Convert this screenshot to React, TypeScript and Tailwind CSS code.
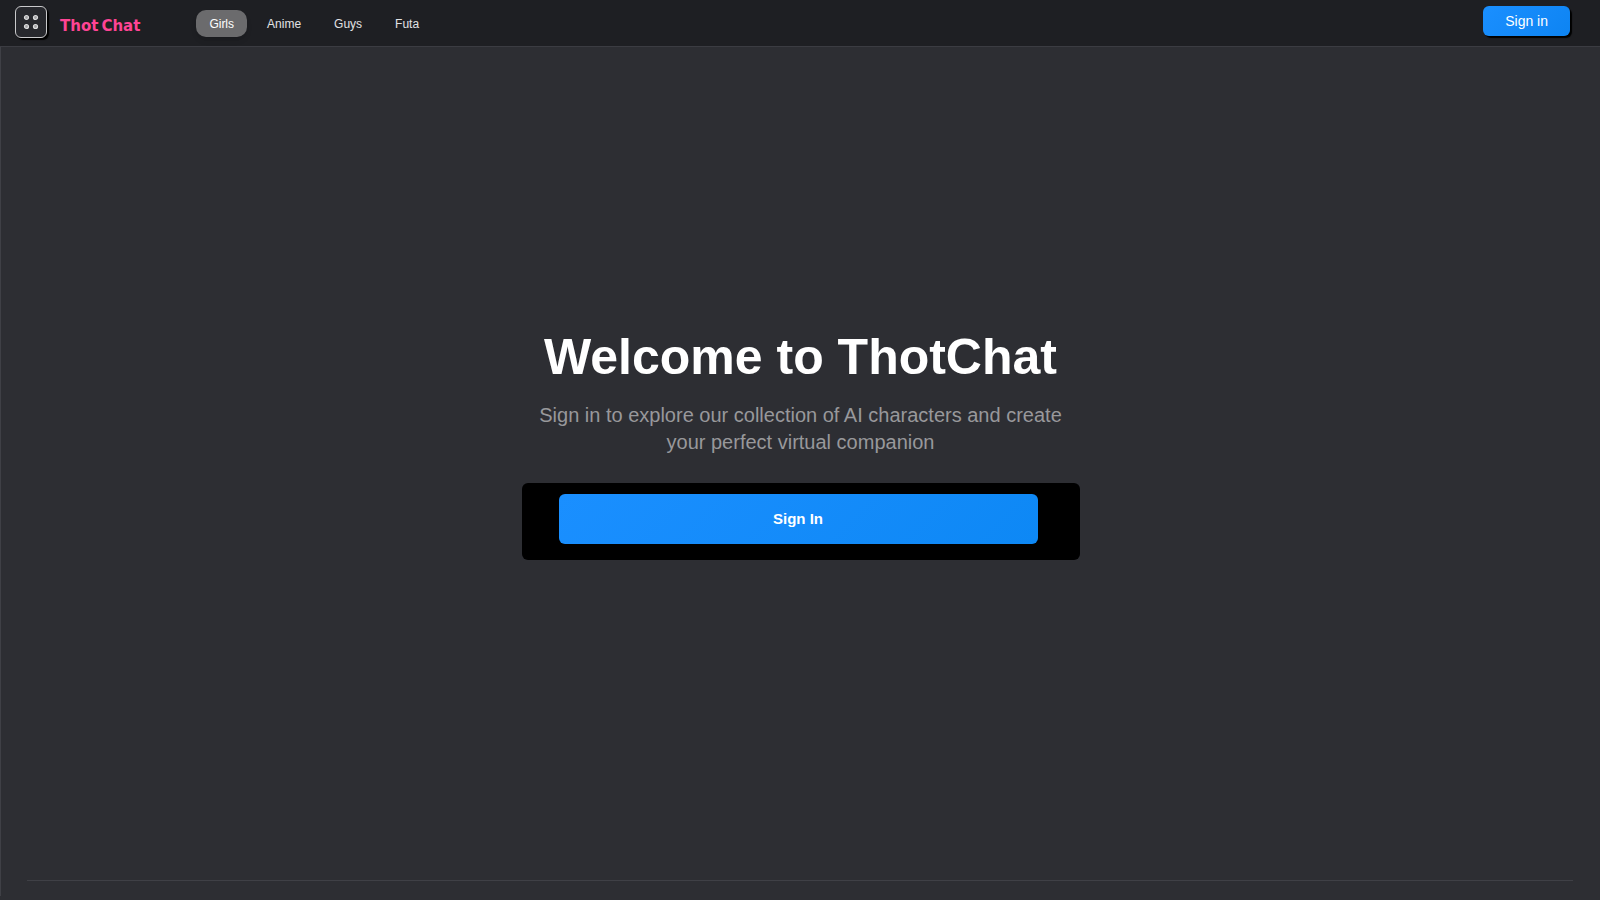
import React, { useState } from 'react';

const categories = ['Girls', 'Anime', 'Guys', 'Futa'];

const GridIcon = () => (
  <svg className="w-4 h-4" viewBox="0 0 16 16" fill="#a3a3a5" stroke="#dededf" strokeWidth="1.2" aria-hidden="true">
    <circle cx="3.5" cy="3.5" r="2" />
    <circle cx="12.5" cy="3.5" r="2" />
    <circle cx="3.5" cy="12.5" r="2" />
    <circle cx="12.5" cy="12.5" r="2" />
  </svg>
);

interface HeaderProps {
  active: string;
  onSelect: (category: string) => void;
}

const Header = ({ active, onSelect }: HeaderProps) => (
  <header className="flex items-start h-[47px] pt-1.5 pl-[15px] pr-[30px] bg-[#1e1f23] border-b border-[#3b3c42]">
    <button
      type="button"
      aria-label="Open menu"
      className="flex items-center justify-center w-8 h-8 rounded-md border border-[#c9c9cb] bg-[#27282d] shadow-[2px_2px_1px_#000]"
    >
      <GridIcon />
    </button>

    <a
      href="#"
      className="flex gap-[3px] ml-[13px] mt-2 text-[15px] leading-6 font-bold text-[#ff4494] font-['DejaVu_Sans',sans-serif]"
    >
      <span>Thot</span>
      <span>Chat</span>
    </a>

    <nav className="flex gap-[7px] ml-14 mt-1">
      {categories.map((category) => (
        <button
          key={category}
          type="button"
          onClick={() => onSelect(category)}
          className={`h-[27px] px-[13px] rounded-[10px] text-xs ${
            active === category ? 'bg-[#6b6b6d] text-white shadow-md' : 'text-[#e2e2e3]'
          }`}
        >
          {category}
        </button>
      ))}
    </nav>

    <button
      type="button"
      className="ml-auto h-[30px] px-[22px] rounded-md bg-linear-135 from-[#1a8fff] to-[#0d84f2] text-sm text-white shadow-[2px_2px_1px_#000]"
    >
      Sign in
    </button>
  </header>
);

export default function App() {
  const [active, setActive] = useState('Girls');

  return (
    <div className="flex flex-col min-h-screen bg-[#2d2e33] font-['Liberation_Sans',Arial,sans-serif]">
      <Header active={active} onSelect={setActive} />

      <main className="flex-1 flex flex-col border-l border-[#3f4046] mb-1">
        <section className="flex-1 flex flex-col items-center justify-center pb-10">
          <div className="w-full max-w-[558px] text-center">
            <h1 className="mb-[15px] text-[50px] leading-[60px] font-bold text-white">Welcome to ThotChat</h1>
            <p className="mb-[27px] px-3 text-xl leading-[27px] text-[#98989b]">
              Sign in to explore our collection of AI characters and create your perfect virtual companion
            </p>
            <div className="pt-[11px] pb-4 pl-[37px] pr-[42px] rounded-md bg-black">
              <button
                type="button"
                className="block w-full h-[50px] rounded-md bg-linear-135 from-[#1a8fff] to-[#0d88f5] text-[15px] font-bold text-white"
              >
                Sign In
              </button>
            </div>
          </div>
        </section>
        <hr className="ml-[26px] mr-[27px] mb-[15px] border-[#3f4046]" />
      </main>
    </div>
  );
}
